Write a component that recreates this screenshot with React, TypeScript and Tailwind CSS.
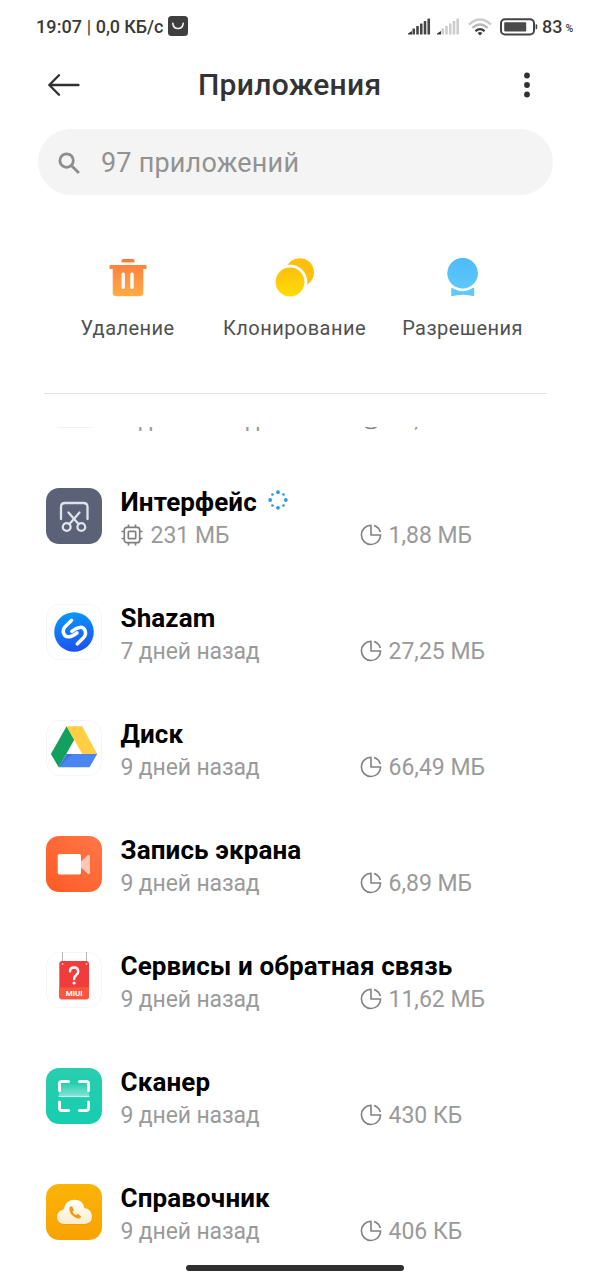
import React from "react";

function SignalIcon({ active }: { active: number }) {
  const bars = [0, 1, 2, 3, 4, 5];
  return (
    <svg width="23" height="17" viewBox="0 0 23 17">
      {bars.map((i) =>
        i === 0 ? (
          <path key={i} d="M0 16.5 V15.5 L4 13 V16.5Z" fill="#3a3a3a" />
        ) : (
          <rect
            key={i}
            x={i * 3.75 + 0.7}
            y={13 - i * 2.5}
            width="2.6"
            height={3.5 + i * 2.5}
            rx="0.5"
            fill={i < active ? "#444444" : "#cdcdcd"}
          />
        ),
      )}
    </svg>
  );
}

function WifiIcon() {
  return (
    <svg width="24" height="18" viewBox="0 0 24 18" fill="none" strokeWidth="2.3">
      <path d="M1 6.6 Q12 -3.6 23 6.6" stroke="#cdcdcd" />
      <path d="M4.3 10 Q12 3 19.7 10" stroke="#b9b9b9" />
      <path d="M7.4 13.2 Q12 9 16.6 13.2" stroke="#3c3c3c" />
      <path d="M9.6 15 Q12 13 14.4 15 L12 17.5Z" fill="#3c3c3c" />
    </svg>
  );
}

function BatteryIcon() {
  return (
    <svg width="38" height="18" viewBox="0 0 38 18">
      <rect x="1" y="1.2" width="33" height="15.2" rx="4" fill="none" stroke="#444444" strokeWidth="2" />
      <rect x="4.2" y="4.2" width="22" height="9.2" rx="1" fill="#4a4a4a" />
      <path d="M35.6 6.3h.6q1 0 1 1v3q0 1-1 1h-.6z" fill="#444444" />
    </svg>
  );
}

function StatusBar() {
  return (
    <div className="flex h-[54px] items-center pb-px pl-[36px] text-[#3a3a3a]">
      <span className="w-[132px] whitespace-pre text-[18px] font-medium tracking-[0.1px]">
        19:07<span className="font-normal"> | </span><span className="tracking-[-0.1px]">0,0 КБ/с</span>
      </span>
      <svg width="20" height="20" viewBox="0 0 20 20" className="-mt-px">
        <rect width="20" height="20" rx="3.5" fill="#3f3f3f" />
        <path d="M4.8 7.3 C5.5 14.2 14.5 14.2 15.2 7.3" fill="none" stroke="#f4f4f4" strokeWidth="1.6" strokeLinecap="round" />
      </svg>
      <div className="ml-[220px] flex items-center">
        <SignalIcon active={6} />
        <div className="ml-[6px] flex">
          <SignalIcon active={1} />
        </div>
        <div className="ml-[8px] flex">
          <WifiIcon />
        </div>
        <div className="ml-[8px] flex">
          <BatteryIcon />
        </div>
        <span className="ml-[4px] text-[18px] font-medium">83</span>
        <span className="ml-[3px] mt-[5px] text-[10.5px] font-medium">%</span>
      </div>
    </div>
  );
}

function Header() {
  return (
    <header className="flex h-[62px] items-center pl-[48px] text-[#333333]">
      <svg width="32" height="22" viewBox="0 0 32 22" fill="none" stroke="#303030" strokeWidth="2.3" strokeLinecap="round" strokeLinejoin="round">
        <path d="M30.5 11H1.5M11 1.3 1.3 11l9.7 9.7" />
      </svg>
      <h1 className="ml-[118px] w-[324px] text-[30px] font-medium leading-[36px] tracking-[0.3px]">Приложения</h1>
      <svg width="10" height="26" viewBox="0 0 10 26" fill="#303030">
        <circle cx="5" cy="3.5" r="2.9" />
        <circle cx="5" cy="13" r="2.9" />
        <circle cx="5" cy="22.5" r="2.9" />
      </svg>
    </header>
  );
}

function SearchField() {
  return (
    <div className="mx-[38px] mt-[13px] flex h-[66px] items-center rounded-full bg-[#f4f4f4] pl-[20px] text-[#929292]">
      <svg width="22" height="22" viewBox="0 0 22 22" fill="none" stroke="#8d8d8d" strokeWidth="2.8" className="mt-px">
        <circle cx="8.6" cy="8.6" r="6.7" />
        <path d="m13.4 13.4 7.500 7.500" />
      </svg>
      <span className="ml-[21px] mt-[2px] text-[27px] tracking-[0.2px]">97 приложений</span>
    </div>
  );
}

function TrashIcon() {
  return (
    <svg width="40" height="40" viewBox="0 0 40 40">
      <defs>
        <linearGradient id="trash" x1="0" y1="0" x2="0" y2="1">
          <stop offset="0" stopColor="#ff7b3d" />
          <stop offset="1" stopColor="#ffab45" />
        </linearGradient>
      </defs>
      <path
        fill="url(#trash)"
        fillRule="evenodd"
        d="M15 1h10q1.500 0 1.500 1.500V4.600h-13V2.500Q13.500 1 15 1ZM2.500 7h35q1 0 1 1v3h-3.200v23.500q0 3.800-3.800 3.800h-23q-3.800 0-3.800-3.800V11H1.500V8q0-1 1-1ZM13.500 16q0-1.500 1.700-1.500t1.700 1.500v13.500q0 1.500-1.700 1.500t-1.700-1.500ZM22.300 16q0-1.500 1.700-1.500t1.700 1.500v13.500q0 1.500-1.700 1.500t-1.700-1.500Z"
      />
    </svg>
  );
}

function CloneIcon() {
  return (
    <svg width="40" height="40" viewBox="0 0 40 40">
      <defs>
        <linearGradient id="clone" x1="0" y1="0" x2="0" y2="1">
          <stop offset="0" stopColor="#fdbf0c" />
          <stop offset="1" stopColor="#ffdc06" />
        </linearGradient>
      </defs>
      <circle cx="24.800" cy="14.400" r="14.200" fill="#fdc10d" />
      <circle cx="15" cy="24" r="17.300" fill="#ffffff" />
      <circle cx="15" cy="24" r="14.400" fill="url(#clone)" />
    </svg>
  );
}

function PermissionIcon() {
  return (
    <svg width="40" height="40" viewBox="0 0 40 40">
      <defs>
        <linearGradient id="badge" x1="0" y1="0" x2="0" y2="1">
          <stop offset="0" stopColor="#4fbafa" />
          <stop offset="1" stopColor="#5dc8f8" />
        </linearGradient>
      </defs>
      <path d="M8.300 29.500h22.900V38.300q-11.400-3-22.900 0Z" fill="#60c9fa" />
      <circle cx="19.600" cy="15.200" r="18" fill="#ffffff" />
      <circle cx="19.600" cy="15.200" r="15.300" fill="url(#badge)" />
    </svg>
  );
}

const actions = [
  { label: "Удаление", Icon: TrashIcon },
  { label: "Клонирование", Icon: CloneIcon },
  { label: "Разрешения", Icon: PermissionIcon },
];

function Actions() {
  return (
    <div className="mx-[44px] mt-[62px] grid h-[137px] grid-cols-[167px_167px_169px] border-b border-[#e2e2e2]">
      {actions.map(({ label, Icon }) => (
        <div key={label} className="flex flex-col items-center pt-px">
          <Icon />
          <span className="mt-[17px] text-[20px] leading-[26px] tracking-[0.45px] text-[#505050]">{label}</span>
        </div>
      ))}
    </div>
  );
}

const tile = "h-[56px] w-[56px] shrink-0";

function ScissorsTile() {
  return (
    <svg className={tile} viewBox="0 0 56 56">
      <rect width="56" height="56" rx="13" fill="#5b6278" />
      <g fill="none" stroke="#dfe2ea" strokeWidth="2.300" strokeLinecap="round">
        <path d="M15 31V19q0-4 4-4h18.500q4 0 4 4v12" />
        <path d="M22.500 24.500 32.700 36.200M33.500 24.500 23.300 36.200" />
        <circle cx="20.700" cy="39" r="3.900" />
        <circle cx="35.300" cy="39" r="3.900" />
      </g>
    </svg>
  );
}

function ShazamTile() {
  return (
    <svg className={tile} viewBox="0 0 56 56">
      <defs>
        <linearGradient id="shz" x1="0.400" y1="0" x2="0.600" y2="1">
          <stop offset="0" stopColor="#0a98fb" />
          <stop offset="1" stopColor="#1d50f0" />
        </linearGradient>
      </defs>
      <rect x="0.500" y="0.500" width="55" height="55" rx="13" fill="#ffffff" stroke="#f5f5f5" />
      <circle cx="28" cy="28" r="19.800" fill="url(#shz)" />
      <g fill="none" stroke="#ffffff" strokeWidth="3.500" strokeLinecap="round">
        <path d="M25.600 16.300 19.800 21.900C14.800 26.700 18 33.300 23 32.800C26 32.500 28 31.300 31 28.800" />
        <path d="M31.200 39.900 37 34.300C42 29.500 38.800 22.900 33.800 23.400C30.800 23.700 28.800 24.900 25.800 27.400" />
      </g>
    </svg>
  );
}

function DriveTile() {
  return (
    <svg className={tile} viewBox="0 0 56 56">
      <rect x="0.500" y="0.500" width="55" height="55" rx="13" fill="#ffffff" stroke="#f5f5f5" />
      <path d="M20.600 6.300 28.300 19.700 12.700 47.300 4.900 34Z" fill="#11a05e" />
      <path d="M20.600 6.300H36.100L51.200 34H36.200Z" fill="#ffce43" />
      <path d="M20.600 34H51.200L43.500 47.300H12.700Z" fill="#4a86f2" />
      <path d="M20.600 34H27L12.700 47.300Z" fill="#3f78dc" />
    </svg>
  );
}

function RecorderTile() {
  return (
    <svg className={tile} viewBox="0 0 56 56">
      <defs>
        <linearGradient id="rec" x1="1" y1="0" x2="0" y2="1">
          <stop offset="0" stopColor="#ff7747" />
          <stop offset="1" stopColor="#fe5a24" />
        </linearGradient>
      </defs>
      <rect width="56" height="56" rx="13" fill="url(#rec)" />
      <path d="M35 25.500 42 19q2-.500 2 1.500v16q0 2-2 1.500L35 31.500Z" fill="#ffc7b4" />
      <rect x="11.700" y="18" width="23.300" height="20.500" rx="1.800" fill="#ffffff" />
    </svg>
  );
}

function FeedbackTile() {
  return (
    <svg className={tile} viewBox="0 0 56 56">
      <rect x="0.500" y="0.500" width="55" height="55" rx="13" fill="#ffffff" stroke="#f5f5f5" />
      <path d="M16.500 0V12M40.500 0V12" stroke="#b5b5b5" strokeWidth="1" />
      <rect x="13.300" y="9" width="29.700" height="38.200" rx="2.800" fill="#f03c3b" />
      <path d="M13.300 35.200H43V44.400q0 2.800-2.800 2.800H16.100q-2.800 0-2.800-2.800Z" fill="#f9553f" />
      <circle cx="16.500" cy="12" r="1" fill="#ffb9b0" />
      <circle cx="40.500" cy="12" r="1" fill="#ffb9b0" />
      <path d="M24 19.300Q24 15.500 28 15.500T32.200 19.500Q32.200 21.700 30.200 23.100Q28.100 24.500 28.100 27" fill="none" stroke="#ffffff" strokeWidth="2.500" strokeLinecap="round" />
      <circle cx="28.100" cy="31" r="1.600" fill="#ffffff" />
      <text x="28.200" y="43.700" textAnchor="middle" className="text-[8px] font-bold" fill="#ffffff">
        MIUI
      </text>
    </svg>
  );
}

function ScannerTile() {
  return (
    <svg className={tile} viewBox="0 0 56 56">
      <defs>
        <linearGradient id="scan" x1="0" y1="0" x2="0" y2="1">
          <stop offset="0" stopColor="#28cdae" />
          <stop offset="1" stopColor="#17cdb0" />
        </linearGradient>
        <linearGradient id="beam" x1="0" y1="0" x2="0" y2="1">
          <stop offset="0" stopColor="#ffffff" stopOpacity="0.050" />
          <stop offset="1" stopColor="#ffffff" stopOpacity="0.450" />
        </linearGradient>
      </defs>
      <rect width="56" height="56" rx="13" fill="url(#scan)" />
      <rect x="13" y="16" width="30" height="12.500" fill="url(#beam)" />
      <path d="M12.500 28.500h31" stroke="#c9fff2" strokeWidth="1.200" />
      <path d="M13.500 22.500V16q0-2.500 2.500-2.500h6.500M33.500 13.500H40q2.500 0 2.500 2.500v6.500M42.500 34v6q0 2.500-2.500 2.500h-6.500M22.500 42.500H16q-2.500 0-2.500-2.500v-6" fill="none" stroke="#ffffff" strokeWidth="3" strokeLinecap="round" />
    </svg>
  );
}

function DirectoryTile() {
  return (
    <svg className={tile} viewBox="0 0 56 56">
      <defs>
        <linearGradient id="dir" x1="0" y1="0" x2="0" y2="1">
          <stop offset="0" stopColor="#fbb406" />
          <stop offset="1" stopColor="#f8a203" />
        </linearGradient>
        <linearGradient id="cloud" x1="0" y1="0" x2="0" y2="1">
          <stop offset="0" stopColor="#ffffff" />
          <stop offset="1" stopColor="#fdeccb" />
        </linearGradient>
      </defs>
      <rect width="56" height="56" rx="13" fill="url(#dir)" />
      <path d="M18.500 41Q11 40.500 11 34Q11 28 17.500 26.500Q19.500 16.500 28.500 16.500Q37 16.500 38.500 25Q46 26.500 46 33.500Q46 40.500 38.500 41Z" fill="#e08a00" opacity="0.350" />
      <path d="M18.500 40Q11 39.500 11 33Q11 27 17.500 25.500Q19.500 15.800 28.500 15.800Q37 15.800 38.500 24Q46 25.500 46 32.500Q46 39.500 38.500 40Z" fill="url(#cloud)" />
      <path d="M23.800 22.800 26 22.300 28 26.200 26.400 27.800Q27.300 30 30 31.200L31.700 29.800 35 32.300 34.300 34.300Q31 35.500 26.700 31.800Q22 27.500 23.800 22.800Z" fill="#f39a0b" />
    </svg>
  );
}

function BlankTile() {
  return (
    <svg className={tile} viewBox="0 0 56 56">
      <rect x="0.500" y="0.500" width="55" height="55" rx="13" fill="#ffffff" stroke="#f0f0f0" />
    </svg>
  );
}

function ChipIcon() {
  return (
    <svg width="22" height="22" viewBox="0 0 22 22" fill="none" stroke="#808080" strokeWidth="1.700">
      <rect x="3.300" y="3.300" width="15.400" height="15.400" rx="2.500" />
      <rect x="7.300" y="7.300" width="7.400" height="7.400" rx="1" />
      <path d="M7.500 3V.500M14.500 3V.500M7.500 21.500V19M14.500 21.500V19M3 7.500H.500M3 14.500H.500M21.500 7.500H19M21.500 14.500H19" />
    </svg>
  );
}

function PieIcon() {
  return (
    <svg width="22" height="22" viewBox="0 0 22 22" fill="none" stroke="#808080" strokeWidth="1.600">
      <path d="M11 1.300A9.600 9.600 0 1 0 20.600 11H11V1.300Z" strokeLinejoin="round" />
      <path d="M14 1.600A9.800 9.800 0 0 1 20.300 8" />
    </svg>
  );
}

function Spinner() {
  const dots = [0, 1, 2, 3, 4, 5, 6, 7];
  return (
    <svg width="20" height="20" viewBox="0 0 20 20" fill="#2b9be0">
      {dots.map((i) => (
        <circle
          key={i}
          cx={10 + 7.8 * Math.cos((i * Math.PI) / 4)}
          cy={10 + 7.8 * Math.sin((i * Math.PI) / 4)}
          r={i % 2 === 0 ? 1.9 : 1.35}
        />
      ))}
    </svg>
  );
}

type AppEntry = {
  name: string;
  info: string;
  size: string;
  Tile: () => React.JSX.Element;
  running?: boolean;
};

const apps: AppEntry[] = [
  { name: "", info: "9 дней назад", size: "21,58 МБ", Tile: BlankTile },
  { name: "Интерфейс", info: "231 МБ", size: "1,88 МБ", Tile: ScissorsTile, running: true },
  { name: "Shazam", info: "7 дней назад", size: "27,25 МБ", Tile: ShazamTile },
  { name: "Диск", info: "9 дней назад", size: "66,49 МБ", Tile: DriveTile },
  { name: "Запись экрана", info: "9 дней назад", size: "6,89 МБ", Tile: RecorderTile },
  { name: "Сервисы и обратная связь", info: "9 дней назад", size: "11,62 МБ", Tile: FeedbackTile },
  { name: "Сканер", info: "9 дней назад", size: "430 КБ", Tile: ScannerTile },
  { name: "Справочник", info: "9 дней назад", size: "406 КБ", Tile: DirectoryTile },
];

function AppRow({ name, info, size, Tile, running }: AppEntry) {
  return (
    <li className="flex h-[116px] shrink-0 items-center pl-[46px]">
      <Tile />
      <div className="ml-[18.5px] flex flex-col pt-[4px]">
        <div className="flex h-[34px] items-center whitespace-nowrap text-[26px] font-bold leading-[34px] tracking-[0.12px] text-black">
          {name}
          {running && (
            <span className="-mt-[3px] ml-[11px]">
              <Spinner />
            </span>
          )}
        </div>
        <div className="flex h-[33px] items-center whitespace-nowrap text-[23px] leading-[33px] text-[#9a9a9a]">
          <div className="flex w-[239px] items-center gap-[8px]">
            {running && <ChipIcon />}
            <span className={running ? "" : "tracking-[-0.15px]"}>{info}</span>
          </div>
          <div className="flex items-center gap-[7px]">
            <PieIcon />
            {size}
          </div>
        </div>
      </div>
    </li>
  );
}

export default function App() {
  return (
    <div className="relative flex h-[1280px] w-[591px] flex-col overflow-hidden bg-white font-['Roboto',sans-serif]">
      <StatusBar />
      <Header />
      <SearchField />
      <Actions />
      <div className="mt-[33px] min-h-0 flex-1 overflow-hidden">
        <ul className="-mt-[85px] flex flex-col">
          {apps.map((app, i) => (
            <AppRow key={i} {...app} />
          ))}
        </ul>
      </div>
      <div className="absolute bottom-[9px] left-[186px] h-[6px] w-[218px] rounded-full bg-[#303030]" />
    </div>
  );
}
